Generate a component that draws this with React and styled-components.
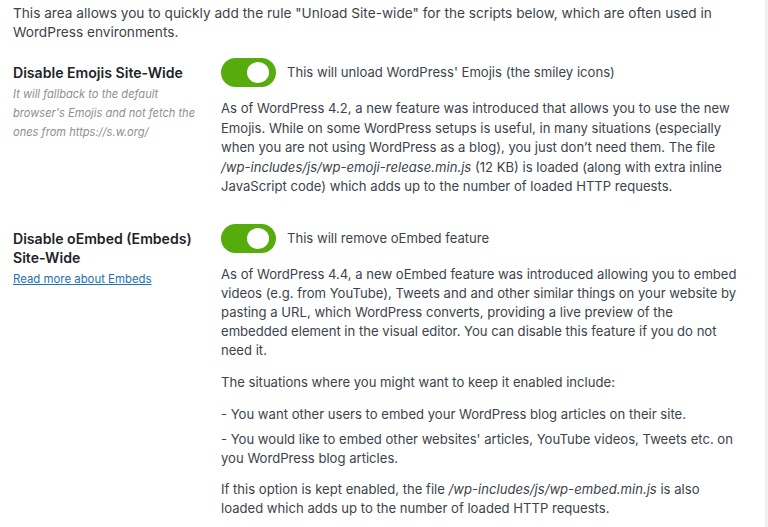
import React, { useState } from 'react';
import styled, { createGlobalStyle } from 'styled-components';

const GlobalStyle = createGlobalStyle`
  html, body {
    margin: 0;
    padding: 0;
    background: #f0f0f1;
  }
  body {
    font-family: Inter, "Noto Sans", "Liberation Sans", sans-serif;
    color: #3c434a;
    -webkit-font-smoothing: antialiased;
  }
`;

const Panel = styled.div`
  width: 752px;
  min-height: 527px;
  background: #fff;
  padding: 4px 0 0 13px;
  box-sizing: content-box;
  overflow: hidden;
`;

const Intro = styled.p`
  margin: 0;
  font-size: 13.65px;
  line-height: 19px;
  width: 720px;
`;

const Row = styled.div`
  display: grid;
  grid-template-columns: 208px 515.5px;
  padding-top: ${(p) => p.$top}px;
`;

const LabelCol = styled.div`
  padding-top: 5px;
`;

const Heading = styled.h3`
  margin: 0;
  font-size: 14.1px;
  line-height: 19px;
  font-weight: 600;
  color: #1d2327;
  width: 190px;
`;

const Note = styled.p`
  margin: 3px 0 0;
  font-size: 11.1px;
  line-height: 19px;
  font-style: italic;
  color: #8c8f94;
  width: 198px;
`;

const MoreLink = styled.a`
  display: inline-block;
  margin-top: 3px;
  font-size: 11.4px;
  line-height: 19px;
  color: #2271b1;
  text-decoration: underline;
`;

const ToggleRow = styled.label`
  display: flex;
  align-items: center;
  gap: 11px;
  font-size: 13.1px;
  line-height: 19px;
  cursor: pointer;
`;

const Track = styled.span`
  position: relative;
  flex: none;
  width: 55px;
  height: 29px;
  border-radius: 15px;
  background: ${(p) => (p.$on ? '#56ab0d' : '#c3c4c7')};
  transition: background 0.2s;
`;

const Knob = styled.span`
  position: absolute;
  top: 4px;
  left: ${(p) => (p.$on ? '26px' : '4px')};
  width: 22px;
  height: 21px;
  border-radius: 50%;
  background: #fff;
  transition: left 0.2s;
`;

const Body = styled.div`
  margin-top: 12px;

  p {
    line-height: ${(p) => p.$lh}px;
  }
`;

const Para = styled.p`
  margin: ${(p) => p.$gap ?? 13}px 0 0;
  font-size: 13.1px;

  &:first-child {
    margin-top: 0;
  }
`;

const Toggle = ({ label }) => {
  const [on, setOn] = useState(true);
  return (
    <ToggleRow onClick={() => setOn(!on)}>
      <Track $on={on}>
        <Knob $on={on} />
      </Track>
      {label}
    </ToggleRow>
  );
};

export default function App() {
  return (
    <>
      <GlobalStyle />
      <Panel>
        <Intro>
          This area allows you to quickly add the rule "Unload Site-wide" for the scripts below, which are often used in
          WordPress environments.
        </Intro>

        <Row $top={16}>
          <LabelCol>
            <Heading>Disable Emojis Site-Wide</Heading>
            <Note>It will fallback to the default browser's Emojis and not fetch the ones from https://s.w.org/</Note>
          </LabelCol>
          <div>
            <Toggle label="This will unload WordPress' Emojis (the smiley icons)" />
            <Body $lh={19.6}>
              <Para>
                As of WordPress 4.2, a new feature was introduced that allows you to use the new Emojis. While on some
                WordPress setups is useful, in many situations (especially when you are not using WordPress as a blog),
                you just don’t need them. The file <em>/wp-includes/js/wp-emoji-release.min.js</em> (12 KB) is loaded
                (along with extra inline JavaScript code) which adds up to the number of loaded HTTP requests.
              </Para>
            </Body>
          </div>
        </Row>

        <Row $top={27}>
          <LabelCol>
            <Heading>Disable oEmbed (Embeds) Site-Wide</Heading>
            <MoreLink href="#">Read more about Embeds</MoreLink>
          </LabelCol>
          <div>
            <Toggle label="This will remove oEmbed feature" />
            <Body $lh={19}>
              <Para>
                As of WordPress 4.4, a new oEmbed feature was introduced allowing you to embed videos (e.g. from
                YouTube), Tweets and and other similar things on your website by pasting a URL, which WordPress
                converts, providing a live preview of the embedded element in the visual editor. You can disable this
                feature if you do not need it.
              </Para>
              <Para>The situations where you might want to keep it enabled include:</Para>
              <Para>- You want other users to embed your WordPress blog articles on their site.</Para>
              <Para $gap={6}>
                - You would like to embed other websites' articles, YouTube videos, Tweets etc. on you WordPress blog
                articles.
              </Para>
              <Para $gap={12}>
                If this option is kept enabled, the file <em>/wp-includes/js/wp-embed.min.js</em> is also loaded which
                adds up to the number of loaded HTTP requests.
              </Para>
            </Body>
          </div>
        </Row>
      </Panel>
    </>
  );
}
